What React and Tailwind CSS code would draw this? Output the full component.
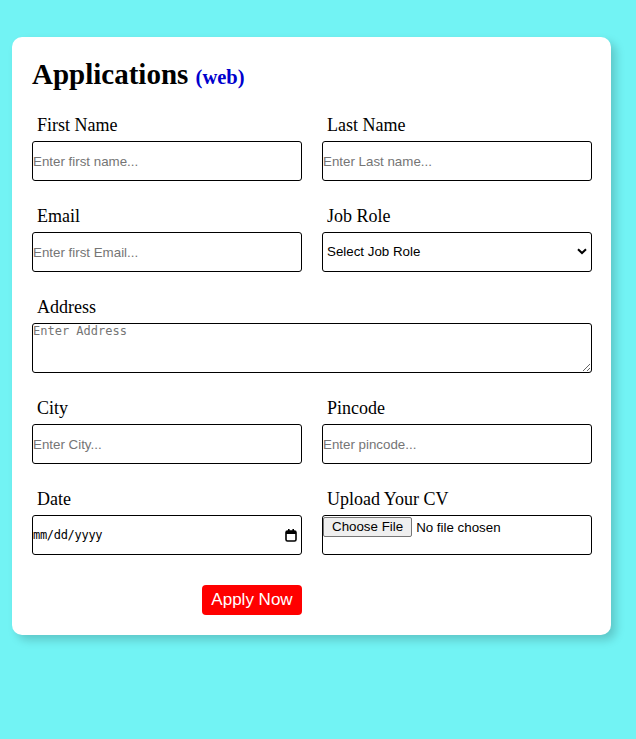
import React from "react";

const serif = "font-['Liberation_Serif','Times_New_Roman',serif]";
const sans = "font-['Liberation_Sans',Arial,sans-serif]";

function Field({ label, children }) {
  return (
    <div className="flex flex-col">
      <label className={`${serif} text-[18px] leading-[21px] pl-[5px] mt-[1px] mb-[5px] text-black`}>{label}</label>
      {children}
    </div>
  );
}

const inputCls = `${sans} h-[40px] w-full border border-black rounded-[3px] px-0 text-[13.33px] text-black placeholder:text-[#757575] outline-none bg-white`;

export default function App() {
  return (
    <div className="min-h-[739px] bg-[#72f3f4] pt-[37px] pl-[12px]">
      <div className="w-[599px] bg-white rounded-[10px] shadow-[5px_5px_10px_rgba(0,0,0,0.18)] px-[20px] pt-[20px] pb-[20px]">
        <h1 className={`${serif} font-bold text-[29px] leading-[34px] text-black mb-[20px]`}>
          Applications <span className="text-[20.5px] text-[#0000cd]">(web)</span>
        </h1>

        <div className="grid grid-cols-2 gap-x-[20px] gap-y-[24px] w-[560px]">
          <Field label="First Name">
            <input className={inputCls} placeholder="Enter first name..." />
          </Field>
          <Field label="Last Name">
            <input className={inputCls} placeholder="Enter Last name..." />
          </Field>
          <Field label="Email">
            <input className={inputCls} placeholder="Enter first Email..." />
          </Field>
          <Field label="Job Role">
            <div className="relative">
              <select
                className={`${sans} appearance-none h-[40px] w-full border border-black rounded-[3px] pl-[4px] text-[13.33px] text-black bg-white outline-none`}
                defaultValue=""
              >
                <option value="">Select Job Role</option>
                <option>Frontend Developer</option>
                <option>Backend Developer</option>
              </select>
              <svg className="absolute right-[5px] top-[16px] pointer-events-none" width="10" height="7" viewBox="0 0 10 7">
                <path d="M1 1.2 L5 5 L9 1.2" stroke="black" strokeWidth="2" fill="none" />
              </svg>
            </div>
          </Field>
          <div className="col-span-2">
            <Field label="Address">
              <textarea
                className="font-['DejaVu_Sans_Mono','Liberation_Mono',monospace] h-[50px] w-full border border-black rounded-[3px] text-[12px] leading-[15px] text-black placeholder:text-[#757575] outline-none block"
                placeholder="Enter Address"
              />
            </Field>
          </div>
          <Field label="City">
            <input className={inputCls} placeholder="Enter City..." />
          </Field>
          <Field label="Pincode">
            <input className={inputCls} placeholder="Enter pincode..." />
          </Field>
          <Field label="Date">
            <div className="h-[40px] w-full border border-black rounded-[3px] flex items-center justify-between pr-[4px] bg-white">
              <span className="font-['DejaVu_Sans_Mono','Liberation_Mono',monospace] text-[12px] tracking-[-0.3px] text-black">mm/dd/yyyy</span>
              <svg width="12" height="14" viewBox="0 0 12 14">
                <rect x="1" y="3" width="10" height="10" rx="1.5" fill="none" stroke="black" strokeWidth="1.6" />
                <rect x="1" y="3" width="10" height="3" fill="black" />
                <rect x="3" y="1" width="1.6" height="3" fill="black" />
                <rect x="7.4" y="1" width="1.6" height="3" fill="black" />
              </svg>
            </div>
          </Field>
          <Field label="Upload Your CV">
            <div className={`${sans} h-[40px] w-full border border-black rounded-[3px] flex items-start text-[13.33px] text-black bg-white`}>
              <span className="mt-[1px] px-[8px] h-[20px] leading-[18px] border border-[#767676] rounded-[2px] bg-[#efefef]">Choose File</span>
              <span className="ml-[4px] mt-[2px]">No file chosen</span>
            </div>
          </Field>
          <div className="flex justify-end">
            <button className={`${sans} h-[30px] w-[100px] bg-[#ff0000] text-white text-[17px] rounded-[4px] mt-[6px]`}>
              Apply Now
            </button>
          </div>
        </div>
      </div>
    </div>
  );
}
